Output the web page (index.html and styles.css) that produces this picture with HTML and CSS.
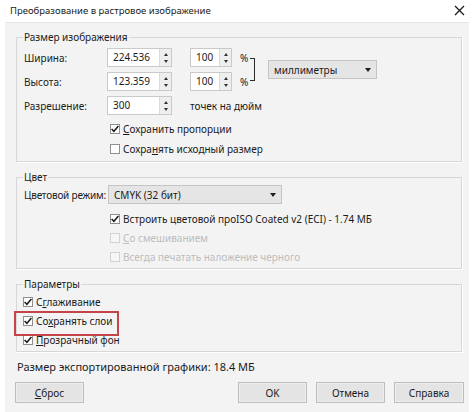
FILE: index.html
```html
<!DOCTYPE html>
<html lang="ru">
<head>
  <meta charset="UTF-8" />
  <title>Преобразование в растровое изображение</title>
  <link rel="stylesheet" href="styles.css">
</head>
<body>
<div class="window">
  <div class="titlebar">
    <span>Преобразование в растровое изображение</span>
    <svg class="close" width="11" height="11" viewBox="0 0 11 11">
      <path d="M1 1 L10 10 M10 1 L1 10" stroke="#1a1a1a" stroke-width="1.3" fill="none"/>
    </svg>
  </div>

  <div class="panel">
    <fieldset class="group">
      <legend>Размер изображения</legend>
      <div class="size-grid">
        <span class="label">Ширина:</span>
        <div class="spin wide"><span class="value">224.536</span><span class="arrows"><i class="up"></i><i class="down"></i></span></div>
        <div class="spin narrow"><span class="value">100</span><span class="arrows"><i class="up"></i><i class="down"></i></span></div>
        <span class="pct">%</span>
        <span class="bracket"></span>
        <div class="select units"><span>миллиметры</span><i class="caret"></i></div>

        <span class="label">Высота:</span>
        <div class="spin wide"><span class="value">123.359</span><span class="arrows"><i class="up"></i><i class="down"></i></span></div>
        <div class="spin narrow"><span class="value">100</span><span class="arrows"><i class="up"></i><i class="down"></i></span></div>
        <span class="pct">%</span>
      </div>
      <div class="row">
        <span class="label">Разрешение:</span>
        <div class="spin wide"><span class="value">300</span><span class="arrows"><i class="up"></i><i class="down"></i></span></div>
        <span class="unit">точек на дюйм</span>
      </div>
      <div class="check indent first">
        <span class="box"><svg width="10" height="10" viewBox="0 0 10 10"><path d="M1.6 5 L3.9 7.3 L8.4 2" stroke="#1a1a1a" stroke-width="1.5" fill="none"/></svg></span>
        <span><u>С</u>охранить пропорции</span>
      </div>
      <div class="check indent">
        <span class="box"></span>
        <span>Сохра<u>н</u>ять исходный размер</span>
      </div>
    </fieldset>

    <fieldset class="group color">
      <legend>Цвет</legend>
      <div class="row">
        <span class="label tight">Цветовой режим:</span>
        <div class="select mode"><span>CMYK (32 бит)</span><i class="caret"></i></div>
      </div>
      <div class="check indent first">
        <span class="box"><svg width="10" height="10" viewBox="0 0 10 10"><path d="M1.6 5 L3.9 7.3 L8.4 2" stroke="#1a1a1a" stroke-width="1.5" fill="none"/></svg></span>
        <span class="clip">Встроить цветовой профиль</span><span class="profile">ISO Coated v2 (ECI) - 1.74 МБ</span>
      </div>
      <div class="check indent disabled">
        <span class="box"></span>
        <span><u>С</u>о смешиванием</span>
      </div>
      <div class="check indent disabled">
        <span class="box"></span>
        <span>Всегда печатать наложение черного</span>
      </div>
    </fieldset>

    <fieldset class="group params">
      <legend>Параметры</legend>
      <div class="check">
        <span class="box"><svg width="10" height="10" viewBox="0 0 10 10"><path d="M1.6 5 L3.9 7.3 L8.4 2" stroke="#1a1a1a" stroke-width="1.5" fill="none"/></svg></span>
        <span>С<u>г</u>лаживание</span>
      </div>
      <div class="check highlight">
        <span class="box"><svg width="10" height="10" viewBox="0 0 10 10"><path d="M1.6 5 L3.9 7.3 L8.4 2" stroke="#1a1a1a" stroke-width="1.5" fill="none"/></svg></span>
        <span>Со<u>х</u>ранять слои</span>
      </div>
      <div class="check">
        <span class="box"><svg width="10" height="10" viewBox="0 0 10 10"><path d="M1.6 5 L3.9 7.3 L8.4 2" stroke="#1a1a1a" stroke-width="1.5" fill="none"/></svg></span>
        <span><u>П</u>розрачный фон</span>
      </div>
    </fieldset>

    <div class="export-size">Размер экспортированной графики: 18.4 МБ</div>

    <div class="buttons">
      <button class="reset"><u>С</u>брос</button>
      <button>OK</button>
      <button>Отмена</button>
      <button>Справка</button>
    </div>
  </div>
</div>
</body>
</html>
```

FILE: styles.css
```css
:root {
  --fon: #f3f3f3;
  --rama: #d7d7d7;
  --texto: #1b1b1b;
  --vermelho: #c4444a;
}

* { box-sizing: border-box; margin: 0; padding: 0; }

body {
  font-family: 'Noto Sans', sans-serif;
  font-size: 10px;
  color: var(--texto);
  background: #fff;
}

.window {
  width: 474px;
  height: 412px;
  display: flex;
  flex-direction: column;
  background: #fff;
}

.titlebar {
  height: 22px;
  display: flex;
  align-items: center;
  justify-content: space-between;
  padding: 0 9px 1px 10px;
  font-size: 9.5px;
}

.panel {
  flex: 1;
  margin: 0 5px;
  background: var(--fon);
  border-top: 1px solid #e6e6e6;
  padding: 7px 7px 0 11px;
}

.group {
  border: 1px solid var(--rama);
  box-shadow: 1px 1px 0 #fff;
  padding: 1px 6px 2px 6px;
  min-width: 0;
}

.group + .group { margin-top: 8px; }

.group legend {
  padding: 0 1px;
  line-height: 14px;
}

.label {
  padding-left: 1px;
  white-space: nowrap;
}

.label.tight { letter-spacing: -0.2px; }

.size-grid {
  display: grid;
  grid-template-columns: 84px 65px 60px 18px 6px auto;
  grid-template-rows: 19px 19px;
  row-gap: 5px;
  margin-top: 3px;
  align-items: center;
}

.row {
  display: flex;
  align-items: center;
  height: 19px;
  margin-top: 5px;
}

.row .label { width: 84px; flex: none; }

.color .row { margin-top: 0; }

.spin {
  display: flex;
  height: 19px;
  border: 1px solid #cacaca;
  background: #fff;
}

.spin.wide { width: 65px; }
.spin.narrow { width: 42px; justify-self: end; }

.spin .value {
  flex: 1;
  padding-left: 5px;
  line-height: 17px;
}

.arrows {
  width: 12px;
  background: #eeeeee;
  border-left: 1px solid #dadada;
  display: flex;
  flex-direction: column;
  justify-content: space-between;
  align-items: center;
  padding: 4px 0 3px;
}

.arrows .up {
  border-left: 2px solid transparent;
  border-right: 2px solid transparent;
  border-bottom: 3px solid #333;
}

.arrows .down {
  border-left: 2px solid transparent;
  border-right: 2px solid transparent;
  border-top: 3px solid #333;
}

.pct { padding-left: 8px; }

.bracket {
  grid-column: 5;
  grid-row: 1 / 3;
  align-self: stretch;
  width: 5px;
  margin: 10px 0 10px;
  border: 1px solid #2a2a2a;
  border-left: none;
}

.select {
  height: 19px;
  display: flex;
  align-items: center;
  justify-content: space-between;
  padding: 0 5px 0 5px;
  background: #e5e5e5;
  border: 1px solid #c4c4c4;
}

.select .caret {
  border-left: 3px solid transparent;
  border-right: 3px solid transparent;
  border-top: 4px solid #1f1f1f;
}

.units {
  grid-column: 6;
  grid-row: 1 / 3;
  width: 109px;
  margin-left: 12px;
}

.mode {
  width: 174px;
  margin-left: 1px;
}

.unit { margin-left: 18px; }

.check {
  display: flex;
  align-items: center;
  gap: 3px;
  height: 19px;
  white-space: nowrap;
}

.group:first-of-type .check { height: 20px; }

.check.indent { margin-left: 87px; }
.check.first { margin-top: 4px; }
.color .check.first { margin-top: 5px; }

.box {
  width: 10px;
  height: 10px;
  flex: none;
  background: #fff;
  border: 1px solid #8f8f8f;
  display: flex;
}

.box svg { margin: -1px; }

.disabled { color: #bdbdbd; }
.disabled .box { border-color: #d2d2d2; background: #f6f6f6; }

.clip {
  width: 113px;
  overflow: hidden;
  flex: none;
}

.profile { margin-left: -3px; }

.highlight {
  position: relative;
  width: fit-content;
}

.highlight::after {
  content: '';
  position: absolute;
  left: -9px;
  right: -7px;
  top: 0;
  height: 21px;
  border: 2px solid var(--vermelho);
}

.export-size {
  margin-top: 8px;
  padding-left: 1px;
  line-height: 14px;
  font-size: 11px;
}

.buttons {
  display: flex;
  gap: 9px;
  margin: 8px -2px 0 -1px;
}

.buttons button {
  width: 69px;
  height: 21px;
  font: inherit;
  color: var(--texto);
  background: #e4e4e4;
  border: 1px solid #bdbdbd;
  box-shadow: inset 0 0 0 1px #eeeeee;
}

.buttons .reset { margin-right: auto; }
.buttons button:last-child { width: 70px; }
```
